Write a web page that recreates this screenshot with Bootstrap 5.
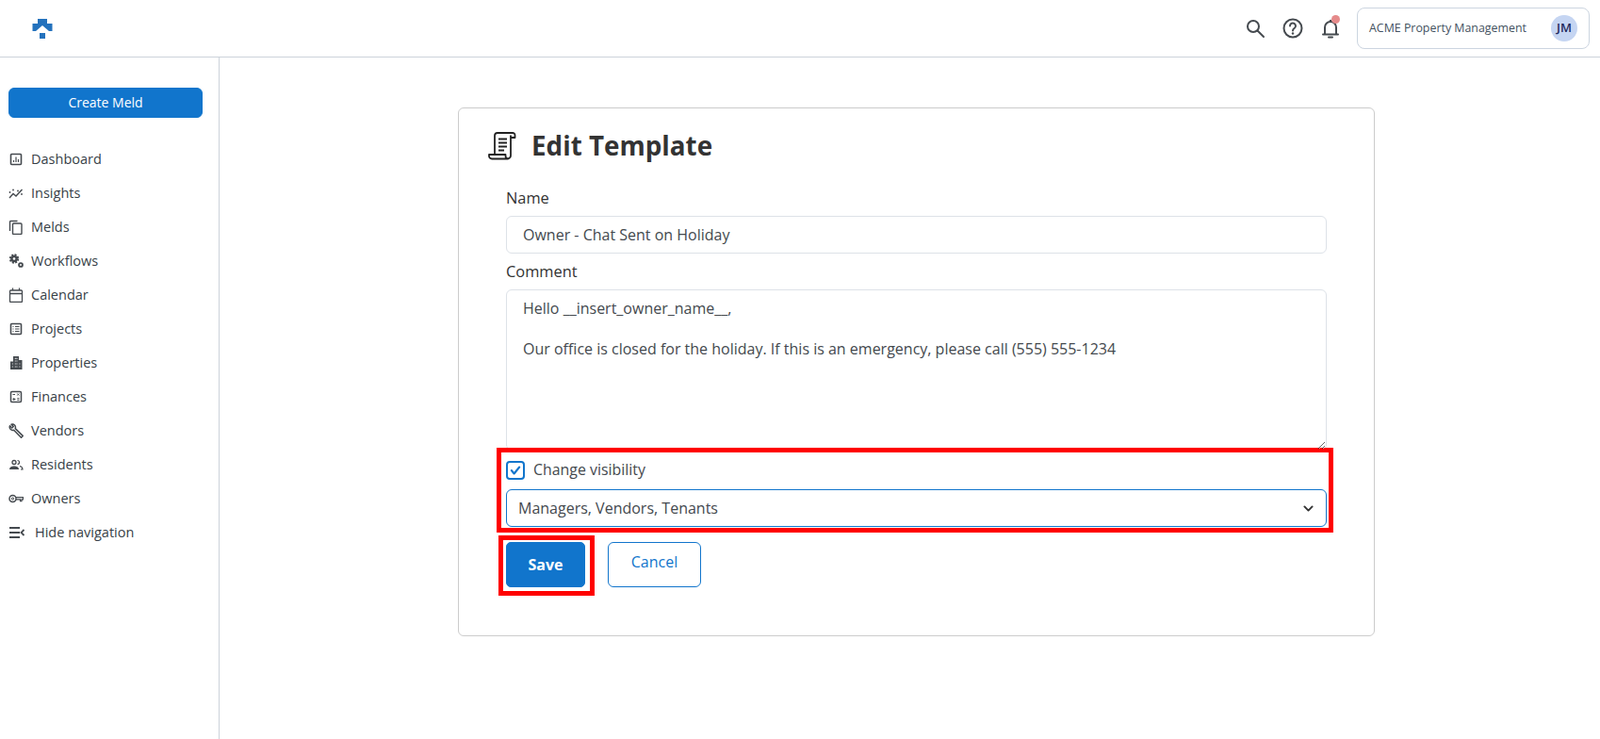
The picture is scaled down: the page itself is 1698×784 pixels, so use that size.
<!DOCTYPE html>
<html lang="en">

<head>
    <meta charset="UTF-8">
    <meta name="viewport" content="width=device-width, initial-scale=1.0">
    <title>Edit Template</title>
    <link href="https://cdn.jsdelivr.net/npm/bootstrap@5.3.3/dist/css/bootstrap.min.css" rel="stylesheet">
    <script src="https://cdn.jsdelivr.net/npm/bootstrap@5.3.3/dist/js/bootstrap.bundle.min.js"></script>
    <style>
        body {
            font-family: "Open Sans", "Liberation Sans", sans-serif;
            color: #373b3f;
            height: 784px;
            overflow: hidden;
        }

        .top-bar {
            height: 61px;
            border-bottom: 1px solid #ccd3da;
            padding: 0 11px 0 34px;
        }

        .top-icon {
            width: 24px;
            height: 24px;
            color: #454a4f;
        }

        .bell-dot {
            top: -2px;
            right: 2px;
            width: 9px;
            height: 9px;
            background: #e58a8a;
        }

        .account-box {
            width: 247px;
            height: 44px;
            margin-left: 16px;
            padding: 0 12px 0 12px;
            border: 1px solid #ccd5e0;
            border-radius: 8px;
            font-size: 12.4px;
            font-weight: 500;
            color: #44525f;
        }

        .avatar-dot {
            width: 28px;
            height: 28px;
            background: #c5d5f2;
            color: #1f2a5c;
            font-size: 13px;
            font-weight: 600;
        }

        .side-bar {
            width: 233px;
            height: 723px;
            border-right: 1px solid #ccd3da;
            padding: 32px 17px 0 9px;
        }

        .meld-btn {
            height: 32px;
            padding: 0 0 2px;
            font-size: 14px;
            background: #1175cc;
            border-color: #1175cc;
            border-radius: 6px;
            margin-bottom: 26px;
        }

        .side-link {
            height: 36px;
            font-size: 14.5px;
            font-weight: 500;
            color: #373f47;
            text-decoration: none;
            gap: 8px;
        }

        .side-link svg {
            width: 16px;
            height: 16px;
            color: #454a4f;
            flex: none;
        }

        .side-link.hide-nav {
            gap: 10px;
        }

        .side-link.hide-nav svg {
            width: 18px;
        }

        .template-card {
            width: 973px;
            height: 561px;
            margin: 53px 0 0 253px;
            border: 1px solid #ccc;
            border-radius: 6px;
            padding: 0 50px;
        }

        .title-row {
            height: 66px;
            margin: 7px 0 11px -19px;
            gap: 16px;
        }

        .title-row h1 {
            font-size: 27.8px;
            font-weight: 700;
            color: #333;
            margin: 0;
        }

        .field-label {
            font-size: 16.4px;
            font-weight: 500;
            color: #333;
            line-height: 22px;
            margin-bottom: 8px;
            display: block;
        }

        .name-input,
        .comment-input,
        .visibility-select {
            font-size: 16px;
            color: #44494e;
            border-color: #dde2e8;
            border-radius: 6px;
        }

        .name-input {
            height: 40px;
            padding: 0 17px;
            margin-bottom: 8px;
        }

        .comment-input {
            height: 171px;
            padding: 9px 17px;
            line-height: 21.5px;
            resize: vertical;
        }

        .callout-visibility {
            margin: -3px -7px 0 -10px;
            border: 5px solid #f00;
            padding: 9px 2px 0 5px;
            height: 90px;
        }

        .visibility-check {
            gap: 9px;
            height: 20px;
            margin-bottom: 10px;
            font-size: 15.9px;
            line-height: 18px;
            color: #44494e;
        }

        .visibility-check .form-check-input {
            width: 20px;
            height: 20px;
            margin: 0;
            border: 2px solid #1175cc;
            border-radius: 4px;
            background-color: #fff;
            background-size: 14px;
            background-image: url("data:image/svg+xml,%3csvg xmlns='http://www.w3.org/2000/svg' viewBox='0 0 20 20'%3e%3cpath fill='none' stroke='%231175cc' stroke-linecap='round' stroke-linejoin='round' stroke-width='3' d='m4 10 4 5 8-10'/%3e%3c/svg%3e");
        }

        .visibility-check span {
            margin-bottom: 2px;
        }

        .visibility-select {
            height: 40px;
            padding: 0 12px;
            border-color: #1175cc;
            font-size: 16px;
            background-position: right 12px center;
            background-size: 13px 11px;
            background-image: url("data:image/svg+xml,%3csvg xmlns='http://www.w3.org/2000/svg' viewBox='0 0 16 16'%3e%3cpath fill='none' stroke='%23333' stroke-linecap='round' stroke-linejoin='round' stroke-width='2.8' d='m2 5 6 6 6-6'/%3e%3c/svg%3e");
        }

        .action-row {
            margin-top: 3px;
        }

        .callout-save {
            border: 5px solid #f00;
            padding: 2px 5px 4px 3px;
            margin-left: -8px;
        }

        .save-btn {
            width: 84px;
            height: 48px;
            padding: 0;
            font-size: 16px;
            font-weight: 700;
            background: #1175cc;
            border-color: #1175cc;
            border-radius: 5px;
        }

        .cancel-btn {
            width: 99px;
            height: 48px;
            margin: 7px 0 0 14px;
            padding: 0 0 6px;
            font-size: 16px;
            color: #1175cc;
            border-color: #1175cc;
            border-radius: 6px;
            background: #fff;
        }
    </style>
</head>

<body>
    <!-- Top bar -->
    <header class="top-bar d-flex align-items-center justify-content-between">
        <svg width="22" height="21" viewBox="0 0 22 21" fill="#2472bd">
            <path d="M6 0h10v5h5.500v8h-3.500l-7-6-7 6H0.500V5H6z" />
            <path d="M8 15h6v6H8z" />
        </svg>
        <div class="d-flex align-items-center">
            <svg class="top-icon" viewBox="0 0 24 24" fill="none" stroke="currentColor" stroke-width="2">
                <circle cx="10" cy="10" r="6" />
                <path d="m14.500 14.500 6.500 6.500" stroke-linecap="round" />
            </svg>
            <svg class="top-icon ms-3" viewBox="0 0 24 24" fill="none" stroke="currentColor" stroke-width="2">
                <circle cx="12" cy="12" r="9.500" />
                <path d="M9 9.500a3 3 0 1 1 4.600 2.500c-1 .7-1.600 1.200-1.600 2.500" stroke-linecap="round" />
                <circle cx="12" cy="17.500" r="1.200" fill="currentColor" stroke="none" />
            </svg>
            <span class="position-relative d-inline-flex ms-3">
                <svg class="top-icon" viewBox="0 0 24 24" fill="none" stroke="currentColor" stroke-width="2">
                    <path d="M6 18v-7a6 6 0 0 1 12 0v7" />
                    <path d="M4 18.500h16" stroke-linecap="round" />
                    <path d="M10 21.500h4" stroke-linecap="round" />
                    <path d="M12 3v2" />
                </svg>
                <span class="bell-dot position-absolute rounded-circle"></span>
            </span>
            <div class="account-box d-flex align-items-center justify-content-between">
                <span>ACME Property Management</span>
                <span class="avatar-dot rounded-circle d-flex align-items-center justify-content-center">JM</span>
            </div>
        </div>
    </header>

    <div class="d-flex">
        <!-- Sidebar -->
        <nav class="side-bar flex-shrink-0">
            <button class="btn btn-primary meld-btn w-100" type="button">Create Meld</button>
            <div class="d-flex flex-column">
                <a class="side-link d-flex align-items-center" href="#">
                    <svg viewBox="0 0 16 16" fill="none" stroke="currentColor" stroke-width="1.600">
                        <rect x="2.500" y="2.500" width="11" height="11" rx="1" />
                        <path d="M5.500 11V9M8 11V5.500M10.500 11V8" stroke-width="1.200" />
                    </svg>Dashboard</a>
                <a class="side-link d-flex align-items-center" href="#">
                    <svg viewBox="0 0 16 16" fill="none" stroke="currentColor" stroke-width="1.400">
                        <path d="M1 13 5 8.500l3 2.500 6.500-7" />
                        <path d="M1.500 7v.1M5 4.500v.1M10 5.500v.1M14 9v.1" stroke-width="1.800" stroke-linecap="round" />
                    </svg>Insights</a>
                <a class="side-link d-flex align-items-center" href="#">
                    <svg viewBox="0 0 16 16" fill="none" stroke="currentColor" stroke-width="1.400">
                        <path d="M1.500 12V2.500a1 1 0 0 1 1-1h7" />
                        <rect x="4.500" y="4" width="9.500" height="11.500" rx="1" />
                    </svg>Melds</a>
                <a class="side-link d-flex align-items-center" href="#">
                    <svg viewBox="0 0 16 16" fill="currentColor">
                        <circle cx="6" cy="5.500" r="4.200" fill="none" stroke="currentColor" stroke-width="2" stroke-dasharray="2 1.300" />
                        <circle cx="6" cy="5.500" r="3.800" />
                        <circle cx="6" cy="5.500" r="1.300" fill="#fff" />
                        <circle cx="13" cy="12" r="1.900" fill="none" stroke="currentColor" stroke-width="1.900" />
                    </svg>Workflows</a>
                <a class="side-link d-flex align-items-center" href="#">
                    <svg viewBox="0 0 16 16" fill="none" stroke="currentColor" stroke-width="1.300">
                        <rect x="1.500" y="3" width="13" height="12.500" rx="1" />
                        <path d="M1.500 6.500h13M4.500 .5v2.500M11.500 .5v2.500" />
                    </svg>Calendar</a>
                <a class="side-link d-flex align-items-center" href="#">
                    <svg viewBox="0 0 16 16" fill="none" stroke="currentColor" stroke-width="1.600">
                        <rect x="2.500" y="2.500" width="11" height="11" rx="1" />
                        <path d="M4.500 5.500h1M7 5.500h4.500M4.500 8h1M7 8h4.500M4.500 10.500h1M7 10.500h4.500" stroke-width="1.200" />
                    </svg>Projects</a>
                <a class="side-link d-flex align-items-center" href="#">
                    <svg viewBox="0 0 16 16" fill="currentColor">
                        <path d="M5 1h6v4h3.500v10H2V6.500h3z" />
                        <path d="M6.800 2.800h.9v1.100h-.9zM8.500 2.800h.9v1.100h-.9zM6.800 5.500h.9v1.100h-.9zM8.500 5.500h.9v1.100h-.9zM3.800 8.500h.9v1.100h-.9zM6.800 8.500h.9v1.100h-.9zM8.500 8.500h.9v1.100h-.9zM11.500 8.500h.9v1.100h-.9zM3.800 11.500h.9v1.100h-.9zM6.800 11.500h.9v1.100h-.9zM8.500 11.500h.9v1.100h-.9zM11.500 11.500h.9v1.100h-.9z" fill="#fff" />
                    </svg>Properties</a>
                <a class="side-link d-flex align-items-center" href="#">
                    <svg viewBox="0 0 16 16" fill="none" stroke="currentColor" stroke-width="1.500">
                        <rect x="2.500" y="2.500" width="11" height="11" rx="1.200" />
                        <path d="M4.500 5.500h2.500M9.300 4.500l2 2M11.300 4.500l-2 2M4.500 10.500h3M5.800 9v3M9.300 9.700h2.200M9.300 11.300h2.200" stroke-width="1" />
                    </svg>Finances</a>
                <a class="side-link d-flex align-items-center" href="#">
                    <svg viewBox="0 0 16 16" fill="none" stroke="currentColor" stroke-width="1.500">
                        <path d="M1.500 2.800 3.700 5 5.200 3.500 3 1.300a3.300 3.300 0 0 1 4.200 4.300l8 7.800-1.700 1.800L5.600 7.200A3.300 3.300 0 0 1 1.500 2.800z" stroke-linejoin="round" />
                    </svg>Vendors</a>
                <a class="side-link d-flex align-items-center" href="#">
                    <svg viewBox="0 0 16 16" fill="currentColor">
                        <circle cx="6" cy="5.500" r="2" fill="none" stroke="currentColor" stroke-width="1.300" />
                        <path d="M1 13c0-2.500 2.500-3.500 5-3.500s5 1 5 3.500z" />
                        <path d="M9.500 3.500a2 2 0 0 1 0 4M12 9.500c1.500.4 3 1.200 3 3.500h-2" fill="none" stroke="currentColor" stroke-width="1.200" />
                    </svg>Residents</a>
                <a class="side-link d-flex align-items-center" href="#">
                    <svg viewBox="0 0 16 16" fill="none" stroke="currentColor" stroke-width="1.500">
                        <circle cx="4.500" cy="8" r="3.500" />
                        <circle cx="4.500" cy="8" r="1.100" stroke-width="1" />
                        <path d="M8 6.700h7.500v2.200h-1.500v1.800h-1.500V8.900H8" stroke-width="1.200" />
                    </svg>Owners</a>
                <a class="side-link hide-nav d-flex align-items-center" href="#">
                    <svg viewBox="0 0 18 16" fill="none" stroke="currentColor" stroke-width="1.800">
                        <path d="M1 3h11M1 8h11M1 13h11M16.500 5 13.500 8l3 3" />
                    </svg>Hide navigation</a>
            </div>
        </nav>

        <!-- Main content -->
        <main class="flex-grow-1">
            <div class="template-card">
                <div class="title-row d-flex align-items-center">
                    <svg width="30" height="30" viewBox="0 0 30 30" fill="none" stroke="#222" stroke-width="1.800">
                        <path d="M7 24V4a3 3 0 0 1 3-3h16a2.500 2.500 0 0 1 2.500 2.500V6H24" stroke-linejoin="round" />
                        <path d="M24 3.500V25a3.500 3.500 0 0 1-3.500 3.500H4a3 3 0 0 1-3-3V24h17.500v1.500a3 3 0 0 0 3 3" stroke-linejoin="round" />
                        <path d="M11 7.500h9M11 11.500h9M11 15.500h9M11 19.500h6" />
                    </svg>
                    <h1>Edit Template</h1>
                </div>
                <form>
                    <label class="field-label" for="tpl-name">Name</label>
                    <input id="tpl-name" class="form-control name-input" type="text" value="Owner - Chat Sent on Holiday">
                    <label class="field-label" for="tpl-comment">Comment</label>
                    <textarea id="tpl-comment" class="form-control comment-input">Hello __insert_owner_name__,

Our office is closed for the holiday. If this is an emergency, please call (555) 555-1234</textarea>
                    <div class="callout-visibility">
                        <label class="visibility-check d-flex align-items-center">
                            <input class="form-check-input" type="checkbox" checked>
                            <span>Change visibility</span>
                        </label>
                        <select class="form-select visibility-select">
                            <option>Managers, Vendors, Tenants</option>
                        </select>
                    </div>
                    <div class="action-row d-flex align-items-start">
                        <div class="callout-save">
                            <button class="btn btn-primary save-btn d-block" type="button">Save</button>
                        </div>
                        <button class="btn cancel-btn" type="button">Cancel</button>
                    </div>
                </form>
            </div>
        </main>
    </div>
</body>

</html>
